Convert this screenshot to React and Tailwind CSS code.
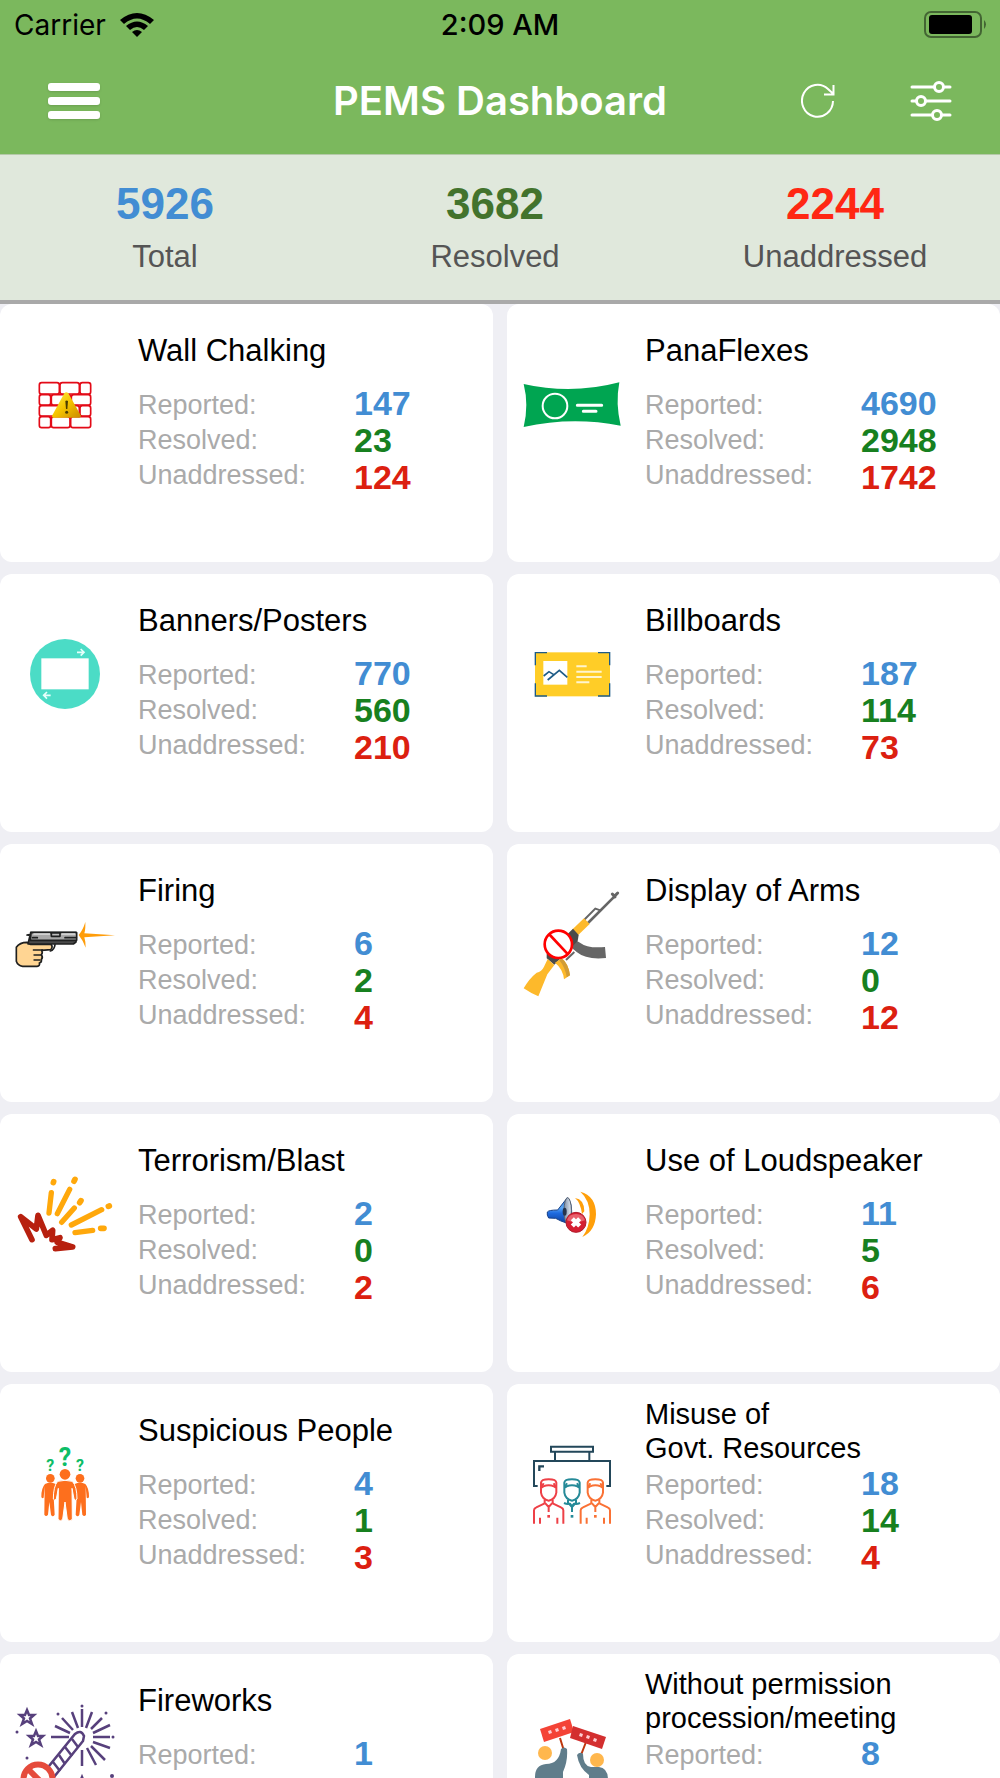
import React from "react";

function WallIcon() {
  return (
    <svg viewBox="39 150 312 330" className="h-[110px] w-[104px]" aria-hidden="true">
      <defs>
        <linearGradient id="warn" x1="0" y1="0" x2="1" y2="1">
          <stop offset="0" stopColor="#fff04a" />
          <stop offset="0.5" stopColor="#f5c400" />
          <stop offset="1" stopColor="#c98a00" />
        </linearGradient>
      </defs>
      <g fill="#fff" stroke="#e30a17" strokeWidth="5">
        <rect x="118" y="248" width="60" height="34" rx="7" />
        <rect x="180" y="248" width="58" height="34" rx="7" />
        <rect x="240" y="248" width="32" height="34" rx="7" />
        <rect x="118" y="284" width="34" height="31" rx="7" />
        <rect x="154" y="284" width="58" height="31" rx="7" />
        <rect x="214" y="284" width="58" height="31" rx="7" />
        <rect x="118" y="317" width="60" height="31" rx="7" />
        <rect x="180" y="317" width="58" height="31" rx="7" />
        <rect x="240" y="317" width="32" height="31" rx="7" />
        <rect x="118" y="350" width="34" height="33" rx="7" />
        <rect x="154" y="350" width="56" height="33" rx="7" />
        <rect x="212" y="350" width="60" height="33" rx="7" />
      </g>
      <path d="M193 280q6-7 12 0l37 66q2 7-5 7h-76q-7 0-4-7z" fill="url(#warn)" />
      <path d="M196 303q4-3 8 0l-2 24h-4z" fill="#4a3c00" />
      <circle cx="200" cy="337" r="4.500" fill="#4a3c00" />
    </svg>
  );
}

function FlexIcon() {
  return (
    <svg viewBox="60 150 312 330" className="h-[110px] w-[104px]" aria-hidden="true">
      <path d="M71 252Q215 285 358 247Q346 310 362 377Q215 349 71 381Q87 315 71 252z" fill="#00a551" />
      <circle cx="165" cy="318" r="37" fill="none" stroke="#fff" strokeWidth="6" />
      <path d="M232 316h73M250 334h38" stroke="#fff" strokeWidth="9" strokeLinecap="round" />
    </svg>
  );
}

function BannerIcon() {
  return (
    <svg viewBox="39 60 312 330" className="h-[110px] w-[104px]" aria-hidden="true">
      <circle cx="195" cy="222" r="105" fill="#4bdcc6" />
      <rect x="124" y="175" width="142" height="93" fill="#fff" />
      <g fill="none" stroke="#e6fffb" strokeWidth="5">
        <path d="M231 157h20M242 147l10 10l-10 10" />
        <path d="M152 286h-20M141 276l-10 10l10 10" />
      </g>
    </svg>
  );
}

function BillboardIcon() {
  return (
    <svg viewBox="30 0 312 330" className="h-[110px] w-[104px]" aria-hidden="true">
      <rect x="75" y="97" width="225" height="132" fill="#ffcd27" />
      <path
        d="M111 98H76v38M264 98h35v38M76 190v38h35M264 228h35v-38"
        fill="none"
        stroke="#1d5b87"
        strokeWidth="4"
      />
      <rect x="100" y="123" width="72" height="71" fill="#fff" />
      <path d="M101 168l16-13l14 9M113 180l35-29l24 21" fill="none" stroke="#1d5b87" strokeWidth="5" />
      <path d="M199 139h31M199 155h76M199 171h76M199 187h39" stroke="#fff5cf" strokeWidth="6" />
    </svg>
  );
}

function FiringIcon() {
  return (
    <svg viewBox="39 30 312 330" className="h-[110px] w-[104px]" aria-hidden="true">
      <g stroke="#1f2020" strokeWidth="5" strokeLinejoin="round" strokeLinecap="round">
        <path d="M165 194q-2 16-14 19" fill="none" />
        <path
          d="M49 202q10-15 32-15l10 6h62q7 8-1 16l-27 2q4 7-1 13q6 8 0 15q2 8-6 10q3 8-7 10H68q-15-2-19-15z"
          fill="#ffd593"
        />
        <path d="M100 210h28M102 225h22M102 240h18" fill="none" strokeWidth="4" />
        <path d="M92 157h136v29l-8 6H84l6-26l-9-1l11-2z" fill="#4a4a4a" />
        <path d="M93 158h137v23H91z" fill="#a9a9a9" />
        <path d="M154 159h26v10h-26z" fill="#bdbdbd" />
        <path d="M98 173h14M195 173h34" />
      </g>
      <path d="M100 162h50M184 162h42" stroke="#dedede" strokeWidth="4" />
      <path d="M256 126Q249 150 236 165Q249 181 257 203Q257 184 253 172L345 166L253 160Q257 148 256 126z" fill="#ff9d0a" />
    </svg>
  );
}

function ArmsIcon() {
  return (
    <svg viewBox="30 60 312 330" className="h-[110px] w-[104px]" aria-hidden="true">
      <g fill="none" stroke="#666" strokeLinecap="round">
        <path d="M234 159l79-79" strokeWidth="8" />
        <path d="M225 147l31-31l15 5" strokeWidth="6" />
        <path d="M307 72l8 9M323 69l-10 10" strokeWidth="9" />
      </g>
      <path d="M192 208l18 10q23 18 75 13l3 33q-59 6-87-17l-20-17z" fill="#666" />
      <path d="M168 270l25-24" stroke="#666" strokeWidth="6" />
      <path d="M222 145l17 17l-35 34l-18-17z" fill="#fdb92b" />
      <path d="M189 176l17 19l-3 18l-70 71l-23-19v-13z" fill="#4b4b4b" />
      <path d="M113 267l20 18l-21 28l-27 66q-22-9-44-24q17-30 39-47q15-3 22-18z" fill="#fdb92b" />
      <path d="M135 278l20-13q20 15 25 51l-18 12q-3-31-27-50z" fill="#fdb92b" />
      <path d="M155 265q20 15 25 51l-10 6q-4-29-22-51z" fill="#d29c35" />
      <circle cx="145" cy="223" r="41" fill="#fff" stroke="#f00" strokeWidth="8" />
      <path d="M117 192l57 61" stroke="#f00" strokeWidth="8" />
    </svg>
  );
}

function BlastIcon() {
  return (
    <svg viewBox="39 0 312 330" className="h-[110px] w-[104px]" aria-hidden="true">
      <path
        d="M154 98l-7 61M209 88l-37 73M223 144l-38 43M305 149l-91 46M278 211l-53 7"
        stroke="#ffa80b"
        strokeWidth="16"
        strokeLinecap="round"
      />
      <path
        d="M161 65l-1 3M225 58l-3 6M243 122l-4 6M325 139l3-1M302 205h10"
        stroke="#ffa80b"
        strokeWidth="17"
        strokeLinecap="round"
      />
      <path
        d="M96 239L62 170L109 207L114 166L139 226L158 211L156 239L180 233L172 247L218 261L166 266"
        fill="none"
        stroke="#b7200f"
        strokeWidth="17"
        strokeLinecap="round"
        strokeLinejoin="round"
      />
    </svg>
  );
}

function SpeakerIcon() {
  return (
    <svg viewBox="0 -30 312 330" className="h-[110px] w-[104px]" aria-hidden="true">
      <defs>
        <linearGradient id="horn" x1="0" y1="0" x2="0" y2="1">
          <stop offset="0" stopColor="#2a76db" />
          <stop offset="0.4" stopColor="#5aa6f5" />
          <stop offset="0.6" stopColor="#1f6be0" />
          <stop offset="1" stopColor="#0d3f9d" />
        </linearGradient>
        <linearGradient id="cone" x1="0" y1="0" x2="1" y2="0">
          <stop offset="0" stopColor="#7d8ea6" />
          <stop offset="1" stopColor="#e4ebf3" />
        </linearGradient>
      </defs>
      <path d="M181 65Q228 78 228 133Q226 184 187 201Q208 175 209 133Q209 90 181 65z" fill="#ff9f0a" />
      <path d="M165 84Q193 88 193 124L186 132Q181 96 165 84z" fill="#ff9f0a" />
      <path d="M82 126q4-6 31-6l29-37q12 10 13 40q-1 30-13 37q-22-7-35-15l-21-1q-6-8-4-18z" fill="url(#horn)" stroke="#173f86" strokeWidth="3" />
      <ellipse cx="143" cy="122" rx="11" ry="39" fill="url(#cone)" stroke="#5b6472" strokeWidth="3" />
      <ellipse cx="134" cy="125" rx="6" ry="12" fill="#26344c" />
      <circle cx="168" cy="157" r="30" fill="#d51f32" stroke="#b11b2b" strokeWidth="3" />
      <path d="M141 151a28 26 0 0 1 54 0q-27 12-54 0z" fill="#e8606c" />
      <path d="M157 146l22 22M179 146l-22 22" stroke="#fff" strokeWidth="13" />
    </svg>
  );
}

function PeopleIcon() {
  const side = "M75 159q16-7 32 0q5 18 3 36l-9 3l3 53q-6 9-11 0l-5-38l-4 38q-6 8-11 0l1-86l-3 35q-6 4-7-3q0-26 11-38z";
  return (
    <svg viewBox="-21 -3 312 330" className="h-[110px] w-[104px]" aria-hidden="true">
      <g fill="#fd6f1d">
        <circle cx="91" cy="142" r="13" />
        <path d={side} />
        <g transform="matrix(-1 0 0 1 271 0)">
          <circle cx="91" cy="142" r="13" />
          <path d={side} />
        </g>
        <path
          d="M113 151q22-6 44 0q14 15 14 53q-4 7-9 0l-6-32l1 93q-8 9-15 0l-7-52l-7 52q-7 9-14 0l1-93l-6 32q-5 7-9 0q0-38 13-53z"
          stroke="#fff"
          strokeWidth="3"
        />
        <circle cx="135" cy="130" r="16" />
      </g>
      <g fill="#0dbd66" textAnchor="middle" className="font-['Roboto',sans-serif] font-bold">
        <text x="135" y="104" fontSize="75">?</text>
        <text x="91" y="121" fontSize="48">?</text>
        <text x="180" y="121" fontSize="48">?</text>
      </g>
    </svg>
  );
}

function Officer({ x, color, full }) {
  return (
    <g transform={`translate(${x} 0)`} fill="none" stroke={color} strokeWidth="6" strokeLinejoin="round">
      <path d="M-23 321v-16q1-10 23-10t23 10v16v14q-3 20-23 24q-20-4-23-24zM-23 321l7-5q16-7 32 0l7 5" />
      <path d="M-20 316l5-9M20 316l-5-9" />
      <path d="M-12 356v9l12 13l12-13v-9M0 377v16" />
      <path d="M0 402v8" strokeWidth="8" />
      {full ? (
        <>
          <path d="M-44 428v-40q0-6 7-9l25-12M44 428v-40q0-6-7-9l-25-12" />
          <path d="M-26 410v18M26 410v18" />
        </>
      ) : (
        <path d="M-24 366q10 5 18 2l6 8l6-8q8 3 18-2" />
      )}
    </g>
  );
}

function MisuseIcon() {
  return (
    <svg viewBox="30 147 312 330" className="h-[110px] w-[104px]" aria-hidden="true">
      <g fill="none" stroke="#23475a" strokeWidth="6">
        <path d="M123 197h126v15H123zM135 212v27M238 212v27" />
        <path d="M83 315H72v-75h228v75h-11" />
        <path d="M88 270v-14h14" strokeWidth="7" />
      </g>
      <Officer x={116} color="#ee4047" full />
      <Officer x={186} color="#258a98" />
      <Officer x={256} color="#fa7134" full />
    </svg>
  );
}

function FireworksIcon() {
  const star = "M0-7L2-2L7-2L3 1.500L5 7L0 4L-5 7L-3 1.500L-7-2L-2-2z";
  return (
    <svg viewBox="13 59 104 110" className="h-[110px] w-[104px]" aria-hidden="true">
      <g fill="none" stroke="#57407c" strokeWidth="2.500">
        <path d={star} transform="translate(27 76)" />
        <path d={star} transform="translate(36 97)" />
        <path d={star} transform="translate(82 143)" />
        <path d="M82 68v18M51 96h18M93 96h17M72 71l6 16M92 71l-6 16M62 77l11 12M102 77l-11 11M55 85l15 7M110 84l-17 8M93 101l17 6M91 105l14 14M87 107l9 17M82 109v16" />
        <path d="M75 93q6-5 9 2l-1 5l-29 36l-9-6z" fill="#fff" />
        <path d="M72 98l6 8M65 106l7 9M59 114l6 9M53 121l7 9" />
      </g>
      <g fill="#57407c">
        <circle cx="82" cy="65" r="1.500" />
        <circle cx="58" cy="73" r="1.500" />
        <circle cx="106" cy="72" r="1.500" />
        <circle cx="113" cy="96" r="1.500" />
        <circle cx="17" cy="91" r="1.500" />
        <circle cx="27" cy="117" r="1.500" />
        <circle cx="112" cy="135" r="2" />
      </g>
      <circle cx="38" cy="138" r="14.500" fill="#fff" stroke="#e54b3c" strokeWidth="6" />
      <path d="M28 128l20 20" stroke="#e54b3c" strokeWidth="6" />
    </svg>
  );
}

function ProcessionIcon() {
  return (
    <svg viewBox="520 59 104 110" className="h-[110px] w-[104px]" aria-hidden="true">
      <path d="M560 97l4 13M586 101l-5 13" stroke="#bf360c" strokeWidth="2" />
      <path d="M540 88l30-10l4 13l-30 10z" fill="#f44336" />
      <path d="M573 85l33 11l-4 12l-32-11z" fill="#d32f2f" />
      <g fill="#ffcdd2">
        <path d="M548 90l3-1l1 3l-3 1zM555 88l3-1l1 3l-3 1zM562 86l3-1l1 3l-3 1z" />
        <path d="M580 92l3 1l-1 3l-3-1zM587 94l3 1l-1 3l-3-1zM594 97l3 1l-1 3l-3-1z" />
      </g>
      <g fill="#ffb74d">
        <circle cx="545" cy="112" r="7" />
        <circle cx="597" cy="119" r="7" />
      </g>
      <g fill="#607d8b">
        <path d="M561 108q3-3 6 0q1 12-4 23v30h-28v-25q0-12 11-13q13 0 15-15z" />
        <path d="M577 114q3-4 6-1q0 12 8 13h8q9 1 9 13v22h-19v-27q-10-7-12-20z" />
      </g>
    </svg>
  );
}

const categories = [
  { title: "Wall Chalking", Icon: WallIcon, reported: 147, resolved: 23, open: 124 },
  { title: "PanaFlexes", Icon: FlexIcon, reported: 4690, resolved: 2948, open: 1742 },
  { title: "Banners/Posters", Icon: BannerIcon, reported: 770, resolved: 560, open: 210 },
  { title: "Billboards", Icon: BillboardIcon, reported: 187, resolved: 114, open: 73 },
  { title: "Firing", Icon: FiringIcon, reported: 6, resolved: 2, open: 4 },
  { title: "Display of Arms", Icon: ArmsIcon, reported: 12, resolved: 0, open: 12 },
  { title: "Terrorism/Blast", Icon: BlastIcon, reported: 2, resolved: 0, open: 2 },
  { title: "Use of Loudspeaker", Icon: SpeakerIcon, reported: 11, resolved: 5, open: 6 },
  { title: "Suspicious People", Icon: PeopleIcon, reported: 4, resolved: 1, open: 3 },
  { title: "Misuse of\nGovt. Resources", Icon: MisuseIcon, reported: 18, resolved: 14, open: 4 },
  { title: "Fireworks", Icon: FireworksIcon, reported: 1, resolved: 1, open: 0 },
  { title: "Without permission\nprocession/meeting", Icon: ProcessionIcon, reported: 8, resolved: 8, open: 0 },
];

function CategoryCard({ title, Icon, reported, resolved, open }) {
  const titleSize = title.includes("\n") ? "text-[29px]" : "text-[31px]";
  return (
    <article className="flex min-h-[258px] items-start rounded-xl bg-white pt-[13px]">
      <div className="flex h-[176px] w-[138px] shrink-0 items-center pl-[13px]">
        <Icon />
      </div>
      <div className="min-w-0 flex-1">
        <div className="flex h-[68px] items-center">
          <h2 className={`whitespace-pre-line leading-[34px] text-black ${titleSize}`}>{title}</h2>
        </div>
        <div className="flex">
          <ul className="w-[216px] shrink-0 pt-[3px] text-[27px] leading-[35px] text-[#aaaaaa]">
            <li>Reported:</li>
            <li>Resolved:</li>
            <li>Unaddressed:</li>
          </ul>
          <ul className="text-[34px] font-bold leading-[37px]">
            <li className="text-[#428dd3]">{reported}</li>
            <li className="text-[#17801f]">{resolved}</li>
            <li className="text-[#dc2010]">{open}</li>
          </ul>
        </div>
      </div>
    </article>
  );
}

function StatusBar() {
  return (
    <div className="grid h-[50px] grid-cols-[1fr_auto_1fr] items-center px-[14px] text-[28px] leading-[32px] text-black">
      <div className="flex items-center gap-[14px]">
        <span>Carrier</span>
        <svg viewBox="0 0 34 24" className="h-[24px] w-[34px]" aria-label="Wi-Fi">
          <path d="M0 7Q17-7 34 7l-4 4Q17 0 4 11z" />
          <path d="M6 13q11-9 22 0l-4 4q-7-6-14 0z" />
          <path d="M12 19q5-4 10 0l-5 5z" />
        </svg>
      </div>
      <span className="text-center text-[29px] font-medium">2:09 AM</span>
      <svg viewBox="0 0 62 28" className="h-[28px] w-[62px] justify-self-end" aria-label="Battery">
        <rect x="1" y="1" width="56" height="25" rx="6" fill="none" stroke="#436533" strokeWidth="2" />
        <rect x="5" y="4" width="43" height="19" rx="3" />
        <path d="M60 9q4 4 0 9z" fill="#436533" />
      </svg>
    </div>
  );
}

export default function App() {
  return (
    <div className="flex h-screen flex-col overflow-hidden bg-[#efeff4] font-['Liberation_Sans',Arial,sans-serif]">
      <header className="shrink-0 border-b border-[#b5c9a9] bg-[#7bb85d] font-['Inter',sans-serif]">
        <StatusBar />
        <div className="grid h-[104px] grid-cols-[1fr_auto_1fr] items-center px-[48px] pb-[3px]">
          <button type="button" aria-label="Menu" className="flex w-[52px] flex-col gap-[6px]">
            <span className="h-[8px] rounded-[3px] bg-white shadow-sm" />
            <span className="h-[8px] rounded-[3px] bg-white shadow-sm" />
            <span className="h-[8px] rounded-[3px] bg-white shadow-sm" />
          </button>
          <h1 className="text-[40px] font-semibold leading-[48px] text-white">PEMS Dashboard</h1>
          <div className="flex items-center justify-end gap-[75px]">
            <button type="button" aria-label="Refresh">
              <svg viewBox="0 0 34 36" className="h-[36px] w-[34px]" fill="none" stroke="#fff" strokeWidth="2">
                <path d="M32 18a15.500 16 0 1 1-5-12l6 5.500M32.500 2v9.500h-9.500" />
              </svg>
            </button>
            <button type="button" aria-label="Filters">
              <svg viewBox="0 0 42 42" className="h-[42px] w-[42px]" fill="none" stroke="#fff" strokeWidth="3" strokeLinecap="round">
                <path d="M2 7h22M35 7h5M2 21h4M16 21h24M2 35h20M32 35h8" />
                <circle cx="29" cy="7" r="4.500" />
                <circle cx="11" cy="21" r="4.500" />
                <circle cx="27" cy="35" r="4.500" />
              </svg>
            </button>
          </div>
        </div>
      </header>

      <section className="grid shrink-0 grid-cols-[33fr_33fr_34fr] border-b-4 border-[#a9a9a9] bg-[#e0e8dc] pt-[25px] pb-[14px] text-center text-[31px] leading-[58px] text-[#555555]">
        <div>
          <p className="text-[44px] font-bold leading-[48px] text-[#428dd3]">5926</p>
          <p>Total</p>
        </div>
        <div>
          <p className="text-[44px] font-bold leading-[48px] text-[#43732d]">3682</p>
          <p>Resolved</p>
        </div>
        <div className="pl-[10px]">
          <p className="text-[44px] font-bold leading-[48px] text-[#ff2713]">2244</p>
          <p>Unaddressed</p>
        </div>
      </section>

      <main className="grid min-h-0 flex-1 auto-rows-max grid-cols-2 gap-x-[14px] gap-y-3 overflow-y-auto [scrollbar-width:none]">
        {categories.map((c) => (
          <CategoryCard key={c.title} {...c} />
        ))}
      </main>
    </div>
  );
}
